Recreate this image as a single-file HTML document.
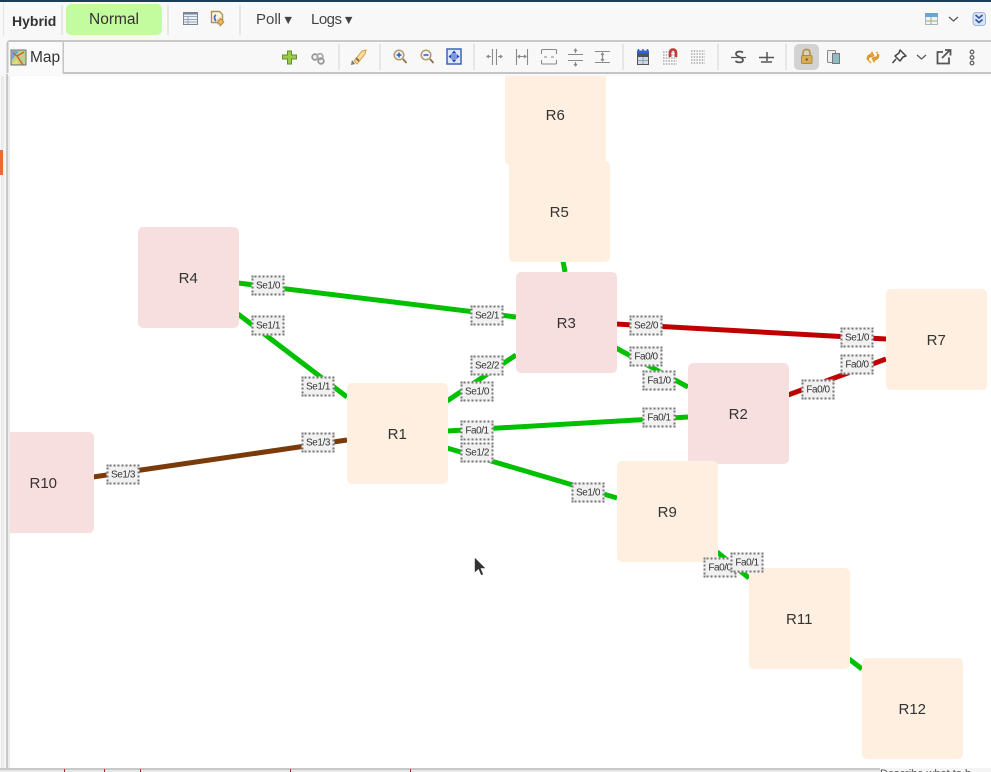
<!DOCTYPE html>
<html><head><meta charset="utf-8">
<style>
html,body{margin:0;padding:0;background:#f8f8f8;}
body{width:991px;height:772px;position:relative;overflow:hidden;font-family:"Liberation Sans","DejaVu Sans",sans-serif;color:#333;}
.a{position:absolute;}
.n{position:absolute;width:100.500px;height:100.500px;border-radius:5px;text-align:center;line-height:104px;font-size:15px;color:#333;}
.o{background:#ffefe0;}
.p{background:#f7dfe0;}
.l{position:absolute;width:29px;height:16px;background:#f1f1f1;border:2px dotted #777;text-align:center;font-size:10px;line-height:17px;color:#333;white-space:nowrap;transform:translate(-16.500px,-9.500px);overflow:visible;letter-spacing:-.45px;}
.sep{position:absolute;width:2px;background:#e6e6e6;}
</style></head>
<body>
<div class="a" style="left:0;top:0;width:991px;height:2px;background:#1d3c56;"></div>
<div class="a" style="left:3px;top:2px;width:1px;height:34px;background:#e4e4e4;"></div>

<div class="a" style="left:12px;top:13px;font-size:14px;font-weight:bold;color:#333;">Hybrid</div>
<div class="sep" style="left:61px;top:5px;height:30px;"></div>
<div class="a" style="left:66px;top:4px;width:96px;height:31px;background:#c3fb9f;border-radius:5px;text-align:center;line-height:31px;font-size:15.500px;color:#333;">Normal</div>
<div class="sep" style="left:167px;top:5px;height:30px;"></div>
<div class="sep" style="left:239px;top:5px;height:30px;"></div>
<div class="a" style="left:256px;top:11px;font-size:15px;color:#444;">Poll<span style="font-size:12.500px;margin-left:1px;">▼</span></div>
<div class="a" style="left:311px;top:11px;font-size:15px;letter-spacing:-.5px;color:#444;">Logs<span style="font-size:12.500px;margin-left:1px;">▼</span></div>

<svg class="a" style="left:0;top:0" width="991" height="76" viewBox="0 0 991 76" fill="none">
 <!-- table icon -->
 <rect x="183.500" y="12.500" width="14" height="12" fill="#eef0f3" stroke="#7a8698"/>
 <path d="M184 13.500h13" stroke="#7a8698" stroke-width="2"/>
 <path d="M184 16.500h13M184 19.500h13M184 22h13M188 17v7" stroke="#9aa5b5"/>
 <!-- doc icon -->
 <path d="M211.500 11.500h8l3 3v8h-11z" fill="#fbf5e3" stroke="#b0924e" stroke-width="1.400"/>
 <path d="M216 15c-2 1-2 4 0 6" stroke="#3c78b8" stroke-width="1.800"/>
 <path d="M218 20h2v-2l4 4-4 4v-2h-2z" fill="#f0b860" stroke="#a8742c" stroke-width=".7"/>
 <!-- top right -->
 <rect x="925.500" y="13.500" width="12" height="11" fill="#f0f5e8" stroke="#a8b4c0"/>
 <rect x="925" y="13" width="13" height="4" fill="#6aa2da"/>
 <path d="M931 17v8M926 21h11" stroke="#9bb08c"/>
 <path d="M949 17l4.500 4 4.500-4" stroke="#555" stroke-width="1.200"/>
 <rect x="973" y="12.500" width="12.500" height="13" rx="3" fill="#d8e4f4" stroke="#a0b6d4"/>
 <path d="M975.500 15l3.500 3 3.500-3M975.500 19.500l3.500 3 3.500-3" stroke="#2f4f9c" stroke-width="1.500"/>

 <!-- frame -->
 <path d="M9 41H991" stroke="#c9c9c9" stroke-width="2"/>
 <path d="M7.500 73V44q0-3 3-3H60q3 0 3 3v28q0 1 2 1H991" stroke="#c4c4c4" stroke-width="2" fill="#fafafa"/>
 <rect x="8.500" y="42" width="54" height="33" fill="#fafafa"/>
 <!-- Map icon -->
 <rect x="11" y="50" width="15" height="15" fill="#bcd48a" stroke="#6f6f6f"/>
 <path d="M12 51h7l-7 9z" fill="#6fa8d8"/>
 <path d="M23 65l-6-9-4-3M17 56l7-4" stroke="#d9582c" stroke-width="1.300"/>
 <path d="M12 64l5-5 2 5z" fill="#efd870"/>

 <!-- plus -->
 <path d="M287.500 51h4v4h5v4h-5v5h-4v-5h-5v-4h5z" fill="#9ccc45" stroke="#5c9230"/>
 <!-- link -->
 <circle cx="315" cy="57" r="2.800" stroke="#999" stroke-width="1.800"/>
 <circle cx="320" cy="56.500" r="2.800" stroke="#aaa" stroke-width="1.800"/>
 <circle cx="321" cy="61" r="2.800" stroke="#999" stroke-width="1.800"/>
 <!-- rocket -->
 <path d="M354 61l8-10 4-1-1 4-8 10z" fill="#f6dca0" stroke="#d8a040"/>
 <path d="M352 60l3 4-4 1z" fill="#777"/>
 <path d="M356 58l3 3" stroke="#8a7040" stroke-width="2"/>

 <!-- zoom -->
 <g>
  <circle cx="399" cy="55" r="4.800" fill="#eef3fb" stroke="#b49a6a" stroke-width="1.500"/>
  <path d="M403 59l3.500 4" stroke="#8c7548" stroke-width="1.800"/>
  <path d="M396.500 55h5M399 52.500v5" stroke="#2c58b8" stroke-width="1.500"/>
  <circle cx="426" cy="55" r="4.800" fill="#eef3fb" stroke="#b49a6a" stroke-width="1.500"/>
  <path d="M430 59l3.500 4" stroke="#8c7548" stroke-width="1.800"/>
  <path d="M423.500 55h5" stroke="#2c58b8" stroke-width="1.500"/>
 </g>
 <rect x="447" y="49" width="14" height="15" fill="#dfe8f8" stroke="#3a62c0" stroke-width="1.500"/>
 <path d="M454 50.500l2.500 3h-5zM454 62.500l2.500-3h-5zM448.500 56.500l3-2.500v5zM459.500 56.500l-3-2.500v5z" fill="#1e46b0"/>
 <rect x="451" y="54" width="6" height="5" fill="#7d9ade"/>

 <!-- align icons -->
 <g stroke="#8a8a8a" stroke-width="1.100">
  <path d="M492.500 49v16M496.500 49v16M487 56.500h4M498 56.500h4"/>
  <path d="M489 55l-2 1.500 2 1.500M500 55l2 1.500-2 1.500"/>
  <path d="M516.500 49v16M527.500 49v16M518 56.500h8"/>
  <path d="M520 55l-2 1.500 2 1.500M524 55l2 1.500-2 1.500"/>
  <path d="M541.500 54v-3.500q0-1 1-1h13q1 0 1 1v3.500M541.500 60v3q0 1 1 1h13q1 0 1-1v-3M544 57h3M551 57h3"/>
  <path d="M568 54.500h15M568 60.500h15M575.500 49v4M575.500 62v4"/>
  <path d="M574 51l1.500-2 1.500 2M574 64l1.500 2 1.500-2"/>
  <path d="M595 51.500h15M595 62.500h15M602.500 53v8"/>
  <path d="M601 55l1.500-2 1.500 2M601 59l1.500 2 1.500-2"/>
 </g>

 <!-- calendar/grid -->
 <rect x="637.500" y="52.500" width="11" height="12" fill="#cfd8e0" stroke="#555"/>
 <rect x="638" y="53" width="10" height="4" fill="#4a5560"/>
 <path d="M637 52h12" stroke="#2f63d0" stroke-width="3"/>
 <path d="M638.500 49v2M643 49v2M647.500 49v2" stroke="#2f63d0" stroke-width="1.500"/>
 <path d="M638 60.500h10M643 57v7" stroke="#8898a8" stroke-width=".8"/>
 <path d="M663 52h14M663 55h14M663 58h14M663 61h14M663 64h14" stroke="#aaa" stroke-width="1.500" stroke-dasharray="1.500 1.200"/>
 <path d="M670 57v-4q0-3.500 3-3.500t3 3.500v4" stroke="#c43a3a" stroke-width="2.600"/>
 <path d="M691 51h14M691 54h14M691 57h14M691 60h14M691 63h14" stroke="#aaa" stroke-width="1.500" stroke-dasharray="1.500 1.200"/>

 <!-- strike -->
 <path d="M743 52.500c-2-1.500-7-1.500-7 1.500s7 3 7 6-5.500 3-7.500 1" stroke="#555" stroke-width="1.800"/>
 <path d="M731 57.500h15" stroke="#555" stroke-width="1.200"/>
 <path d="M767 52v9M761 62h11M759 57.500h15" stroke="#555" stroke-width="1.500"/>

 <!-- lock -->
 <rect x="794" y="44" width="25" height="26" rx="5" fill="#d2d2d2"/>
 <path d="M803 56v-3q0-3.500 3.500-3.500t3.500 3.500v3" stroke="#b89648" stroke-width="1.800"/>
 <rect x="801.500" y="55.500" width="10.500" height="8" rx="1" fill="#d8ae55" stroke="#b28c3c"/>
 <circle cx="806.700" cy="59.500" r="1.200" fill="#7a5c20"/>
 <!-- copies -->
 <rect x="827.500" y="50.500" width="8" height="12" rx="1" fill="#eee" stroke="#888"/>
 <rect x="832.500" y="53.500" width="7" height="10" fill="#8fbcc4" stroke="#777"/>
 <!-- sync -->
 <path d="M867 59q0-4 4-5l1-2 2 4-4 1 .5-1q-2 1-2 4zM879 55q0 4-4 5l-1 2-2-4 4-1-.5 1q2-1 2-4z" fill="#f0a830" stroke="#d08820" stroke-width=".8"/>
 <path d="M868 60l3 3M878 52l-2 1" stroke="#f0a830" stroke-width="1.500"/>
 <!-- pin -->
 <path d="M900 50l6 6-3 1-3 4-5-5 4-3zM896 59l-3.500 4" stroke="#444" stroke-width="1.500" stroke-linejoin="round"/>
 <path d="M917 55l4.500 4 4.500-4" stroke="#555" stroke-width="1.200"/>
 <!-- open external -->
 <path d="M943 52h-5.500v11.500h11.500v-6" stroke="#555" stroke-width="1.800"/>
 <path d="M942 58l8-8M945 50h5.500v5.500" stroke="#555" stroke-width="1.800"/>
 <!-- dots -->
 <circle cx="972" cy="52" r="1.800" stroke="#666" stroke-width="1.300"/>
 <circle cx="972" cy="57.500" r="1.800" stroke="#666" stroke-width="1.300"/>
 <circle cx="972" cy="63" r="1.800" stroke="#666" stroke-width="1.300"/>
</svg>
<div class="a" style="left:30px;top:49px;font-size:15.500px;color:#333;">Map</div>
<div class="sep" style="left:338px;top:44px;height:26px;"></div>
<div class="sep" style="left:379px;top:44px;height:26px;"></div>
<div class="sep" style="left:473px;top:44px;height:26px;"></div>
<div class="sep" style="left:622px;top:44px;height:26px;"></div>
<div class="sep" style="left:717px;top:44px;height:26px;"></div>
<div class="sep" style="left:785px;top:44px;height:26px;"></div>

<!-- left strips -->
<div class="a" style="left:1px;top:76px;width:3px;height:696px;background:#ececec;"></div>
<div class="a" style="left:0;top:150px;width:3px;height:25px;background:#e8693a;"></div>
<div class="a" style="left:4px;top:76px;width:2px;height:692px;background:#f7f7f7;"></div>
<div class="a" style="left:6px;top:74px;width:2px;height:694px;background:#c8c8c8;"></div>
<div class="a" style="left:8px;top:76px;width:2px;height:692px;background:#ececec;"></div>

<!-- canvas -->
<div class="a" style="left:10px;top:76px;width:981px;height:692px;background:#fff;overflow:hidden;">
 <svg class="a" style="left:-10px;top:-76px" width="991" height="772" viewBox="0 0 991 772" fill="none" stroke-width="5">
  <path d="M238 283L516 317" stroke="#00c000"/>
  <path d="M238 314L347 397" stroke="#00c000"/>
  <path d="M516 355L447 401" stroke="#00c000"/>
  <path d="M447 431L688 417" stroke="#00c000"/>
  <path d="M447 448L617 498" stroke="#00c000"/>
  <path d="M93 477L347 440" stroke="#7a3a0a"/>
  <path d="M616 324L886 339" stroke="#c00000"/>
  <path d="M616 348L688 387" stroke="#00c000"/>
  <path d="M788 395L886 359" stroke="#c00000"/>
  <path d="M563 261L565 272" stroke="#00c000"/>
  <path d="M717 552L749 578" stroke="#00c000"/>
  <path d="M849 659L862 669" stroke="#00c000"/>
 </svg>
 <div class="n o" style="left:495px;top:-12px;">R6</div>
 <div class="n o" style="left:499px;top:85px;">R5</div>
 <div class="n p" style="left:128px;top:151px;">R4</div>
 <div class="n p" style="left:506px;top:196px;">R3</div>
 <div class="n o" style="left:876px;top:213px;">R7</div>
 <div class="n p" style="left:678px;top:287px;">R2</div>
 <div class="n o" style="left:337px;top:307px;">R1</div>
 <div class="n p" style="left:-17px;top:356px;">R10</div>
 <div class="n o" style="left:607px;top:385px;">R9</div>
 <div class="n o" style="left:739px;top:492px;">R11</div>
 <div class="n o" style="left:852px;top:582px;">R12</div>
</div>

<div class="l" style="left:268px;top:285px;">Se1/0</div>
<div class="l" style="left:268px;top:325px;">Se1/1</div>
<div class="l" style="left:487px;top:315px;">Se2/1</div>
<div class="l" style="left:487px;top:365px;">Se2/2</div>
<div class="l" style="left:477px;top:391px;">Se1/0</div>
<div class="l" style="left:318px;top:386px;">Se1/1</div>
<div class="l" style="left:318px;top:442px;">Se1/3</div>
<div class="l" style="left:123px;top:474px;">Se1/3</div>
<div class="l" style="left:477px;top:430px;">Fa0/1</div>
<div class="l" style="left:477px;top:452px;">Se1/2</div>
<div class="l" style="left:588px;top:492px;">Se1/0</div>
<div class="l" style="left:646px;top:325px;">Se2/0</div>
<div class="l" style="left:646px;top:356px;">Fa0/0</div>
<div class="l" style="left:659px;top:380px;">Fa1/0</div>
<div class="l" style="left:659px;top:417px;">Fa0/1</div>
<div class="l" style="left:857px;top:337px;">Se1/0</div>
<div class="l" style="left:857px;top:364px;">Fa0/0</div>
<div class="l" style="left:818px;top:389px;">Fa0/0</div>
<div class="l" style="left:720px;top:567px;">Fa0/0</div>
<div class="l" style="left:747px;top:562px;">Fa0/1</div>

<!-- mouse cursor -->
<svg class="a" style="left:473px;top:556px" width="14" height="22" viewBox="0 0 14 22">
 <path d="M1.500 1v16l4-3.500 2.500 6 2.500-1-2.500-6h5z" fill="#333" stroke="#fff" stroke-width=".6"/>
</svg>

<!-- bottom strip -->
<div class="a" style="left:0;top:768px;width:991px;height:2px;background:#c8c8c8;"></div>
<div class="a" style="left:0;top:770px;width:991px;height:2px;background:#e8e8e8;"></div>
<div class="a" style="left:64px;top:769px;width:1px;height:3px;background:#a03030;"></div>
<div class="a" style="left:104px;top:769px;width:1px;height:3px;background:#a03030;"></div>
<div class="a" style="left:140px;top:769px;width:1px;height:3px;background:#a03030;"></div>
<div class="a" style="left:290px;top:769px;width:1px;height:3px;background:#a03030;"></div>
<div class="a" style="left:410px;top:769px;width:1px;height:3px;background:#a03030;"></div>
<div class="a" style="left:880px;top:768px;width:111px;height:4px;overflow:hidden;background:#f4f4f4;font-size:11px;line-height:12px;color:#555;white-space:nowrap;">Describe what to b</div>
</body></html>
